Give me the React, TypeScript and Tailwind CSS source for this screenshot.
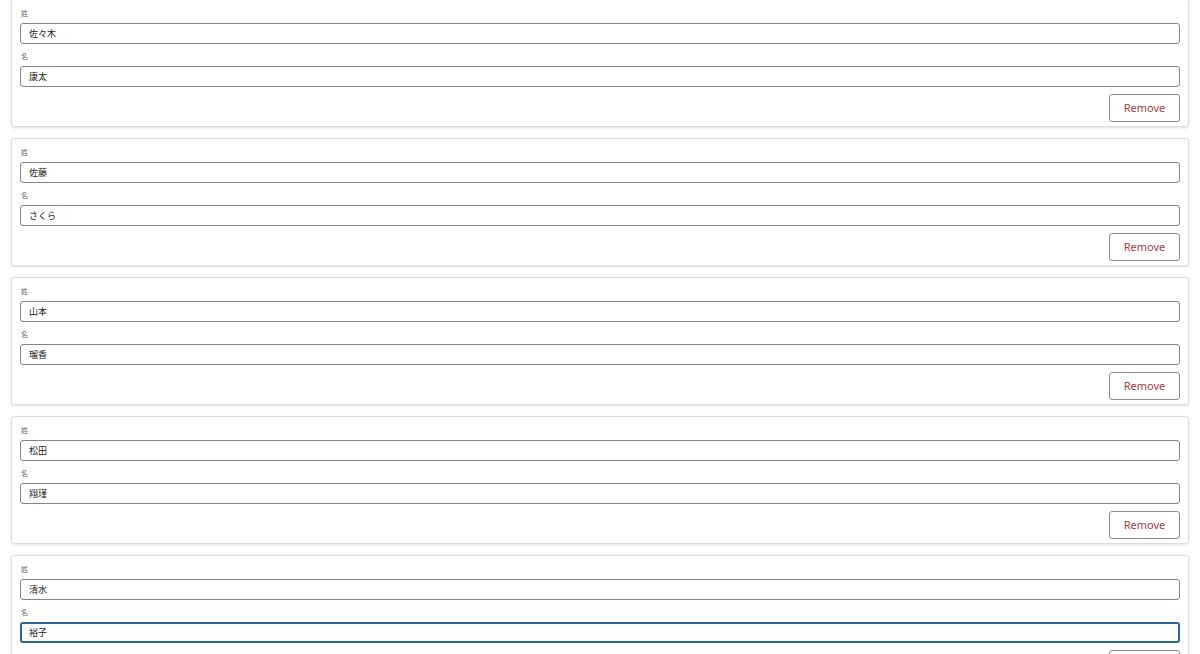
import React from "react";

type Person = { last: string; first: string };

const people: Person[] = [
  { last: "佐々木", first: "康太" },
  { last: "佐藤", first: "さくら" },
  { last: "山本", first: "瑠香" },
  { last: "松田", first: "翔瑾" },
  { last: "清水", first: "裕子" },
];

const font = { fontFamily: '"Noto Sans", "Noto Sans CJK JP", sans-serif' };

function Field({ label, value, focused }: { label: string; value: string; focused?: boolean }) {
  return (
    <div className="flex flex-col">
      <label className="h-[12px] text-[7px] leading-[12px] text-[#666] pl-px">{label}</label>
      <input
        readOnly
        value={value}
        className={
          focused
            ? "mt-[3px] h-[21px] w-full rounded-[3px] border-2 border-[#2a64a8] px-[7px] text-[9px] text-[#222] outline-none"
            : "mt-[3px] h-[21px] w-full rounded-[3px] border border-[#858585] px-[8px] text-[9px] text-[#222] outline-none"
        }
      />
    </div>
  );
}

function PersonCard({ person, focused }: { person: Person; focused?: boolean }) {
  return (
    <div className="flex flex-col rounded-[3px] border border-[#dcdcdc] bg-white px-2 pt-2 pb-1 shadow-[0_1px_3px_rgba(0,0,0,0.12)]">
      <Field label="姓" value={person.last} />
      <div className="mt-[7px]">
        <Field label="名" value={person.first} focused={focused} />
      </div>
      <div className="mt-[7px] flex justify-end">
        <button className="h-[28px] w-[71px] rounded-[3px] border border-[#8c8c8c] bg-white text-[11px] text-[#a83a3e]">
          Remove
        </button>
      </div>
    </div>
  );
}

export default function App() {
  return (
    <div className="h-[654px] w-full overflow-hidden bg-white" style={font}>
      <div className="-mt-px flex flex-col gap-[11px] px-[11px]">
        {people.map((p, i) => (
          <PersonCard key={p.last} person={p} focused={i === people.length - 1} />
        ))}
      </div>
    </div>
  );
}
